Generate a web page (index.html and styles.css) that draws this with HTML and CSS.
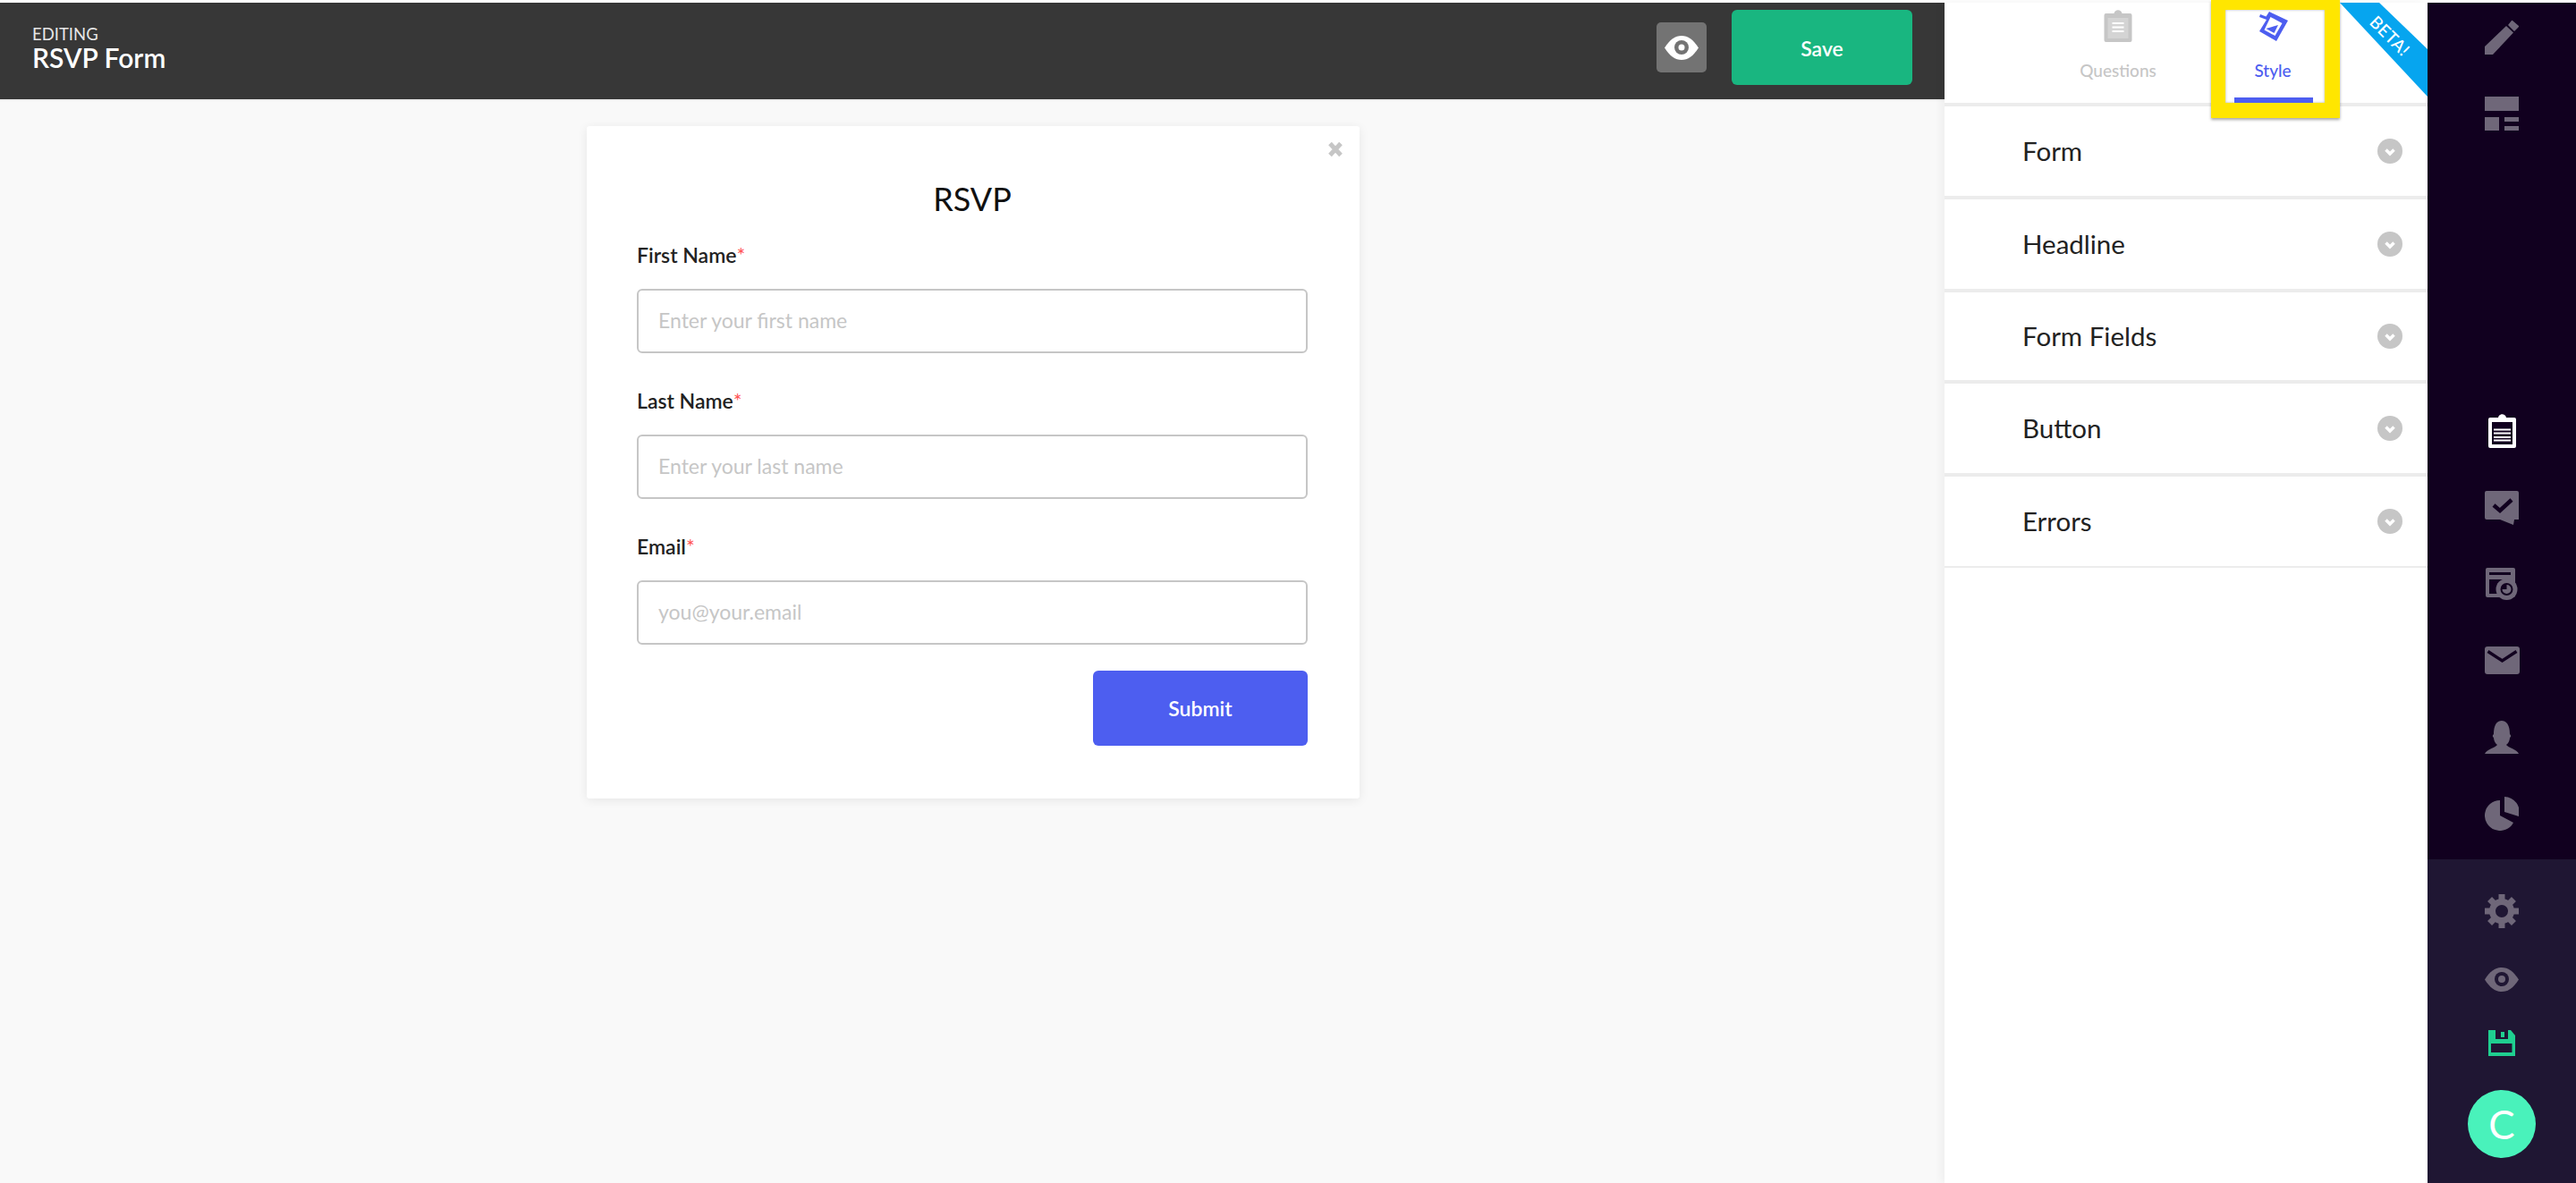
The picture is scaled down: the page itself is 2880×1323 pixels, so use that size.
FILE: index.html
```html
<!DOCTYPE html>
<html lang="en">
<head>
<meta charset="utf-8">
<title>RSVP Form</title>
<link rel="stylesheet" href="styles.css">
</head>
<body>
<div class="app">
  <main class="main">
    <header class="topbar">
      <div class="topbar-title">
        <div class="eyebrow">EDITING</div>
        <div class="doc-name">RSVP Form</div>
      </div>
      <div class="topbar-actions">
        <button class="preview-btn" type="button">
          <svg class="eye" viewBox="0 0 38 27"><path class="eye-w" d="M0 13.5C6 4 12 0 19 0s13 4 19 13.5C32 23 26 27 19 27S6 23 0 13.5z"/><circle class="eye-g" cx="19" cy="13" r="8"/><circle class="eye-w" cx="19" cy="13" r="3.5"/></svg>
        </button>
        <button class="save-btn" type="button">Save</button>
      </div>
    </header>
    <section class="canvas">
      <form class="card">
        <svg class="close" viewBox="0 0 18 18"><path d="M3 2.5 15 15.5M15 2.5 3 15.5"/></svg>
        <h1 class="card-title">RSVP</h1>
        <div class="field">
          <label class="field-label">First Name<span class="req">*</span></label>
          <input class="field-input" placeholder="Enter your first name">
        </div>
        <div class="field">
          <label class="field-label">Last Name<span class="req">*</span></label>
          <input class="field-input" placeholder="Enter your last name">
        </div>
        <div class="field">
          <label class="field-label">Email<span class="req">*</span></label>
          <input class="field-input" placeholder="you@your.email">
        </div>
        <div class="submit-row"><button class="submit-btn" type="button">Submit</button></div>
      </form>
    </section>
  </main>

  <aside class="panel">
    <nav class="tabs">
      <div class="tab">
        <svg class="tab-icon clip-gray" viewBox="0 0 31 36"><path d="M2 4h9c1-5 8-5 9 0h9a2 2 0 0 1 2 2v28a2 2 0 0 1-2 2H2a2 2 0 0 1-2-2V6a2 2 0 0 1 2-2z"/><rect class="cg-inner" x="4" y="9" width="23" height="23"/><path class="cg-lines" d="M9 15h13M9 19.500h13M9 24h13"/></svg>
        <span class="tab-label">Questions</span>
      </div>
      <div class="tab tab-active">
        <svg class="tab-icon bucket" viewBox="0 0 34 34"><path class="b-solid" fill-rule="evenodd" d="M13 1l21 10-13 23L2 23l8-13-8-3 1-3 6.500 2.500zM14.500 7 7.500 21.500l12 6.500 8-14z"/><path class="b-solid" d="M9.500 20 23 16l-4.500 9z"/></svg>
        <span class="tab-label">Style</span>
      </div>
    </nav>
    <div class="acc-row"><span class="acc-label">Form</span><svg class="chev" viewBox="0 0 28 28"><circle cx="14" cy="14" r="14"/><path d="M9.500 12.500 14 17l4.500-4.500"/></svg></div>
    <div class="acc-row"><span class="acc-label">Headline</span><svg class="chev" viewBox="0 0 28 28"><circle cx="14" cy="14" r="14"/><path d="M9.500 12.500 14 17l4.500-4.500"/></svg></div>
    <div class="acc-row acc-short"><span class="acc-label">Form Fields</span><svg class="chev" viewBox="0 0 28 28"><circle cx="14" cy="14" r="14"/><path d="M9.500 12.500 14 17l4.500-4.500"/></svg></div>
    <div class="acc-row"><span class="acc-label">Button</span><svg class="chev" viewBox="0 0 28 28"><circle cx="14" cy="14" r="14"/><path d="M9.500 12.500 14 17l4.500-4.500"/></svg></div>
    <div class="acc-row acc-last"><span class="acc-label">Errors</span><svg class="chev" viewBox="0 0 28 28"><circle cx="14" cy="14" r="14"/><path d="M9.500 12.500 14 17l4.500-4.500"/></svg></div>
    <div class="highlight"></div>
    <div class="ribbon"><span class="ribbon-text">BETA!</span></div>
  </aside>

  <aside class="rail">
    <div class="rail-main">
      <div class="rail-group rail-top">
        <div class="rail-item"><svg class="ri" width="38" height="39" viewBox="0 0 38 39"><path d="M0 30 24 7l8 7.500L9 39H0zM26 6l4-5a1 1 0 0 1 1 0l7 6a1 1 0 0 1 0 1l-5 5z"/></svg></div>
        <div class="rail-item"><svg class="ri" width="38" height="38" viewBox="0 0 38 38"><path d="M0 0h38v16H0zM0 23h16v16H0zM22 23h16v5H22zM22 33h16v5H22z"/></svg></div>
      </div>
      <div class="rail-group rail-mid">
        <div class="rail-item"><svg width="31" height="38" viewBox="0 0 31 38"><path class="w" d="M2 4h9c1-5 8-5 9 0h9a2 2 0 0 1 2 2v30a2 2 0 0 1-2 2H2a2 2 0 0 1-2-2V6a2 2 0 0 1 2-2z"/><rect class="d" x="4" y="9" width="23" height="25"/><path class="wl" d="M6 17.500h19M6 21.500h19M6 26h19M6 29.500h19"/></svg></div>
        <div class="rail-item"><svg class="ri" width="38" height="38" viewBox="0 0 38 38"><path d="M2 0h34a2 2 0 0 1 2 2v30h-5l-1 6-15-6H2a2 2 0 0 1-2-2V2a2 2 0 0 1 2-2z"/><path class="dl" d="m10 16 7 6 13-12"/></svg></div>
        <div class="rail-item"><svg class="ri" width="36" height="36" viewBox="0 0 36 36"><rect width="33" height="33" rx="2"/><rect class="d" x="4" y="5" width="24" height="3"/><rect class="d" x="4" y="13" width="24" height="16"/><circle cx="23.500" cy="24" r="12"/><circle class="d" cx="23.500" cy="24" r="7"/><path d="M23.500 19a5 5 0 1 1-5 5h5z"/></svg></div>
        <div class="rail-item"><svg class="ri" width="39" height="31" viewBox="0 0 39 31"><rect width="39" height="31" rx="3"/><path class="dm" d="m3.500 5.500 16 10.500 16-10.500"/></svg></div>
        <div class="rail-item"><svg class="ri" width="38" height="37" viewBox="0 0 38 37"><path d="M0 37c2-5 12-7 14-10-3-2-4-6-4-8-2-2-1-3 0-4 0-5 1-15 9-15s9 10 9 15c1 1 2 2 0 4 0 2-1 6-4 8 2 3 12 5 14 10z"/></svg></div>
        <div class="rail-item"><svg class="ri" width="38" height="38" viewBox="0 0 38 38"><path d="M22 0v17l16 5A17 17 0 0 0 22 0zM17 4v17l15 8A17 17 0 1 1 17 4z"/></svg></div>
      </div>
    </div>
    <div class="rail-foot">
      <div class="rail-item foot-gear"><svg class="ri2" width="38" height="38" viewBox="0 0 38 38"><circle class="g-ring" cx="19" cy="19" r="10.500"/><g class="g-teeth"><rect x="15.500" width="7" height="8"/><rect x="15.500" width="7" height="8" transform="rotate(45 19 19)"/><rect x="15.500" width="7" height="8" transform="rotate(90 19 19)"/><rect x="15.500" width="7" height="8" transform="rotate(135 19 19)"/><rect x="15.500" width="7" height="8" transform="rotate(180 19 19)"/><rect x="15.500" width="7" height="8" transform="rotate(225 19 19)"/><rect x="15.500" width="7" height="8" transform="rotate(270 19 19)"/><rect x="15.500" width="7" height="8" transform="rotate(315 19 19)"/></g></svg></div>
      <div class="rail-item foot-eye"><svg class="ri2" width="38" height="27" viewBox="0 0 38 27"><path d="M0 13.500C6 4 12 0 19 0s13 4 19 13.500C32 23 26 27 19 27S6 23 0 13.500z"/><circle class="d2" cx="19" cy="13" r="8"/><circle cx="19" cy="13" r="4"/></svg></div>
      <div class="rail-item foot-save"><svg width="30" height="29" viewBox="0 0 30 29"><path class="fl" d="M0 0h25l5 6v23H0z"/><rect class="d2" x="3" y="15" width="23.500" height="10"/><rect class="d2" x="8" y="0" width="14" height="10"/><rect class="fl" x="14" y="2" width="4" height="6"/></svg></div>
      <div class="avatar">C</div>
    </div>
  </aside>
</div>
</body>
</html>
```
FILE: styles.css
```css
* { box-sizing: border-box; }
html, body { margin: 0; height: 100%; overflow: hidden; background: #fff; }
body { font-family: Lato, "Liberation Sans", sans-serif; color: #222; }
button { font-family: inherit; border: 0; padding: 0; }

.app { display: grid; grid-template-columns: 2174px 540px 166px; height: 1323px; padding-top: 3px; }

/* main column */
.main { display: flex; flex-direction: column; min-width: 0; }
.topbar { height: 110px; flex: none; display: flex; align-items: center; justify-content: space-between; background: #373737; border-bottom: 2px solid #eee; padding: 0 36px 8px 36px; background-clip: padding-box; }
.eyebrow { font-size: 18.500px; line-height: 22px; color: #e6e6e6; }
.doc-name { font-size: 30px; line-height: 30px; font-weight: 600; color: #fff; }
.topbar-actions { display: flex; align-items: center; gap: 28px; }
.preview-btn { width: 56px; height: 56px; border-radius: 5px; background: #737373; display: flex; align-items: center; justify-content: center; }
.eye { width: 38px; height: 27px; }
.eye-w { fill: #fff; }
.eye-g { fill: #737373; }
.save-btn { width: 202px; height: 84px; border-radius: 6px; background: #19b680; color: #fff; font-size: 23px; font-weight: 600; padding-top: 2px; }

.canvas { flex: 1; background: #f9f9f9; padding: 28px 0 0 2px; }
.card { position: relative; width: 864px; height: 752px; margin: 0 auto; padding: 0 58px 0 56px; background: #fff; border-radius: 3px; box-shadow: 0 2px 12px rgba(0,0,0,.08); }
.close { position: absolute; top: 17px; right: 18px; width: 18px; height: 18px; fill: none; stroke: #c6c6c6; stroke-width: 5; }
.card-title { margin: 0; padding-top: 57px; text-align: center; font-size: 36px; line-height: 48px; font-weight: 400; color: #111; }
.field-label { display: block; font-size: 23px; line-height: 28px; font-weight: 600; color: #222; padding-top: 25px; margin-bottom: 24px; }
.field + .field .field-label { padding-top: 39px; }
.req { color: #f55; font-weight: 400; }
.field-input { display: block; width: 100%; height: 72px; border: 2px solid #c6c6c6; border-radius: 6px; padding: 0 22px 2px; font: 400 23px Lato, sans-serif; color: #222; background: #fff; outline: 0; }
.field-input::placeholder { color: #c6c6c6; opacity: 1; }
.submit-row { display: flex; justify-content: flex-end; margin-top: 29px; }
.submit-btn { width: 240px; height: 84px; border-radius: 6px; background: #4d5ef0; color: #fff; font-size: 23px; font-weight: 600; }

/* settings panel */
.panel { position: relative; background: #fff; box-shadow: -3px 0 10px rgba(0,0,0,.05); z-index: 1; }
.tabs { height: 116px; display: flex; border-bottom: 4px solid #ececec; padding-left: 124px; }
.tab { width: 140px; margin-right: 32px; display: flex; flex-direction: column; align-items: center; position: relative; z-index: 3; color: #c6c6c6; }
.tab-icon { margin-top: 8px; width: 32px; height: 36px; flex: none; }
.tab-label { margin-top: 21px; font-size: 19px; line-height: 22px; font-weight: 500; }
.tab-active { color: #4d5ef0; width: 111px; margin-left: 15.500px; }
.tab-active::after { content: ""; position: absolute; left: 12.500px; right: 10.500px; bottom: 0; height: 6px; background: #4d5ef0; }
.clip-gray path:first-child { fill: #c6c6c6; }
.cg-inner { fill: #fff; opacity: .25; }
.cg-lines { fill: none; stroke: #fff; stroke-width: 2; }
.bucket { width: 34px; height: 34px; margin-top: 9px; margin-bottom: 1px; }
.b-solid { fill: #4d5ef0; }

.acc-row { height: 104px; display: flex; align-items: center; justify-content: space-between; padding: 0 28px 0 87px; border-bottom: 4px solid #ececec; }
.acc-short { height: 102px; }
.acc-last { border-bottom-width: 2px; height: 102px; }
.acc-label { font-size: 29.500px; line-height: 34px; color: #222; }
.chev { width: 28px; height: 28px; flex: none; }
.chev circle { fill: #c6c6c6; }
.chev path { fill: none; stroke: #fff; stroke-width: 3.500; }

.highlight { position: absolute; left: 298px; top: -3px; width: 144px; height: 132px; border: solid #ffe600; border-width: 11px 17px 17px 16px; box-shadow: 0 2px 3px rgba(0,0,0,.35), inset 0 0 3px rgba(0,0,0,.3); z-index: 2; }
.ribbon { position: absolute; right: 0; top: 0; width: 98px; height: 105px; background: #06a5ef; clip-path: polygon(0 0, 44px 0, 98px 52px, 98px 105px); z-index: 2; }
.ribbon-text { position: absolute; left: 56px; top: 37px; transform: translate(-50%, -50%) rotate(45deg); color: #fff; font-size: 19px; line-height: 20px; font-weight: 500; letter-spacing: .5px; }

/* icon rail */
.rail { display: flex; flex-direction: column; background: #11001f; }
.rail-main { flex: 1; display: flex; flex-direction: column; }
.rail-group { display: flex; flex-direction: column; }
.rail-top { gap: 10px; }
.rail-mid { margin-top: 279px; gap: 9.600px; }
.rail-item { height: 76px; display: flex; align-items: center; justify-content: center; }
.ri path, .ri rect, .ri circle { fill: #6f6779; }
.ri .d, .ri circle.d, .ri rect.d { fill: #11001f; }
.ri .dl, .ri .dm { fill: none; stroke: #11001f; }
.ri path.dl { fill: none; stroke-width: 4.500; }
.ri path.dm { fill: none; stroke-width: 3.500; }
.w { fill: #fff; }
.d { fill: #11001f; }
.wl { fill: none; stroke: #fff; stroke-width: 2; }

.rail-foot { height: 362px; flex: none; background: #1f1633; display: flex; flex-direction: column; align-items: center; }
.ri2 path, .ri2 circle:not(.g-ring):not(.d2) { fill: #6f6779; }
.ri2 .d2 { fill: #1f1633; }
.g-ring { fill: none; stroke: #6f6779; stroke-width: 7; }
.g-teeth rect { fill: #6f6779; }
.foot-gear { margin-top: 20px; }
.foot-eye { height: 38px; margin-top: 19px; }
.foot-save { height: 38px; margin-top: 33px; }
.fl { fill: #1fcf90; }
.d2 { fill: #1f1633; }
.avatar { margin-top: 34px; width: 76px; height: 76px; border-radius: 50%; background: #49f2bb; color: #fff; display: flex; align-items: center; justify-content: center; font-size: 44px; line-height: 1; font-weight: 400; }
```
